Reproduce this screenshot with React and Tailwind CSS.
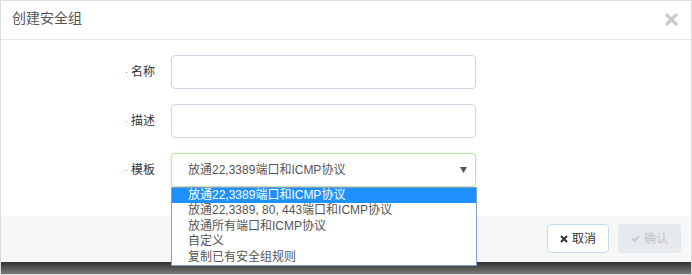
import React from "react";

const options = [
    "放通22,3389端口和ICMP协议",
    "放通22,3389, 80, 443端口和ICMP协议",
    "放通所有端口和ICMP协议",
    "自定义",
    "复制已有安全组规则",
];

function Label({ text }) {
    return (
        <div className="w-[154px] flex items-center justify-end text-[12px] text-[#333]">
            <span className="w-px h-px bg-[#f08080] mr-[4px]" />
            {text}
        </div>
    );
}

export default function App() {
    return (
        <div
            className="relative w-[692px] h-[275px] overflow-hidden bg-white border border-[#dcdcdc] flex flex-col"
            style={{ fontFamily: '"Liberation Sans", "Noto Sans CJK SC", sans-serif' }}
        >
            {/* Header */}
            <div className="h-[39px] shrink-0 border-b border-[#e5e5e5] flex items-center justify-between pl-[11px] pr-[13px]">
                <span className="text-[14px] text-[#555] -mt-[4px]">创建安全组</span>
                <svg width="13" height="13" viewBox="0 0 13 13" className="-mt-[1px]">
                    <path d="M2 2 L11 11 M11 2 L2 11" stroke="#cccccc" strokeWidth="3.2" strokeLinecap="round" />
                </svg>
            </div>

            {/* Body */}
            <div className="h-[176px] shrink-0 pt-[15px] flex flex-col gap-[15px]">
                <div className="flex items-center">
                    <Label text="名称" />
                    <div className="ml-[16px] w-[305px] h-[34px] rounded-[4px] border border-[#cdd7e6] bg-white" />
                </div>
                <div className="flex items-center">
                    <Label text="描述" />
                    <div className="ml-[16px] w-[305px] h-[34px] rounded-[4px] border border-[#cdd7e6] bg-white" />
                </div>
                <div className="flex items-center">
                    <Label text="模板" />
                    <div className="ml-[16px] w-[305px] h-[34px] rounded-[4px] border border-[#c3e0b0] shadow-[0_0_3px_#d8edc9] bg-white flex items-center justify-between pl-[16px] pr-[8px] text-[12px] text-[#555]">
                        <span>{options[0]}</span>
                        <svg width="7" height="6" viewBox="0 0 7 6">
                            <path d="M0 0 H7 L3.5 6 Z" fill="#555" />
                        </svg>
                    </div>
                </div>
            </div>

            {/* Footer */}
            <div className="h-[46px] shrink-0 bg-[#f7f7f7] flex justify-end items-start pt-[8px] pr-[10px] gap-[9px]">
                <button className="w-[62px] h-[29px] rounded-[4px] border border-[#c8dbee] bg-white text-[12px] text-[#333] flex items-center justify-center gap-[4px]">
                    <svg width="8" height="8" viewBox="0 0 8 8">
                        <path d="M1 1 L7 7 M7 1 L1 7" stroke="#333" strokeWidth="2" />
                    </svg>
                    取消
                </button>
                <button className="w-[63px] h-[29px] rounded-[4px] bg-[#e6e9ed] text-[12px] text-[#c2c6cb] flex items-center justify-center gap-[4px]">
                    <svg width="9" height="7" viewBox="0 0 9 7">
                        <path d="M1 3.5 L3.5 6 L8 1" stroke="#c8ccd0" strokeWidth="2" fill="none" />
                    </svg>
                    确认
                </button>
            </div>

            {/* Shadow bar */}
            <div className="flex-1 bg-gradient-to-b from-[#333] to-[#7a7a7a]" />

            {/* Open dropdown */}
            <div className="absolute left-[170px] top-[186px] w-[306px] border border-[#7f9ccb] bg-white text-[12px] text-[#555]">
                {options.map((o, i) => (
                    <div
                        key={o}
                        className={`h-[15.4px] leading-[15.4px] pl-[16px] whitespace-nowrap ${
                            i === 0 ? "bg-[#1e90ff] text-white" : ""
                        }`}
                    >
                        {o}
                    </div>
                ))}
            </div>
        </div>
    );
}
